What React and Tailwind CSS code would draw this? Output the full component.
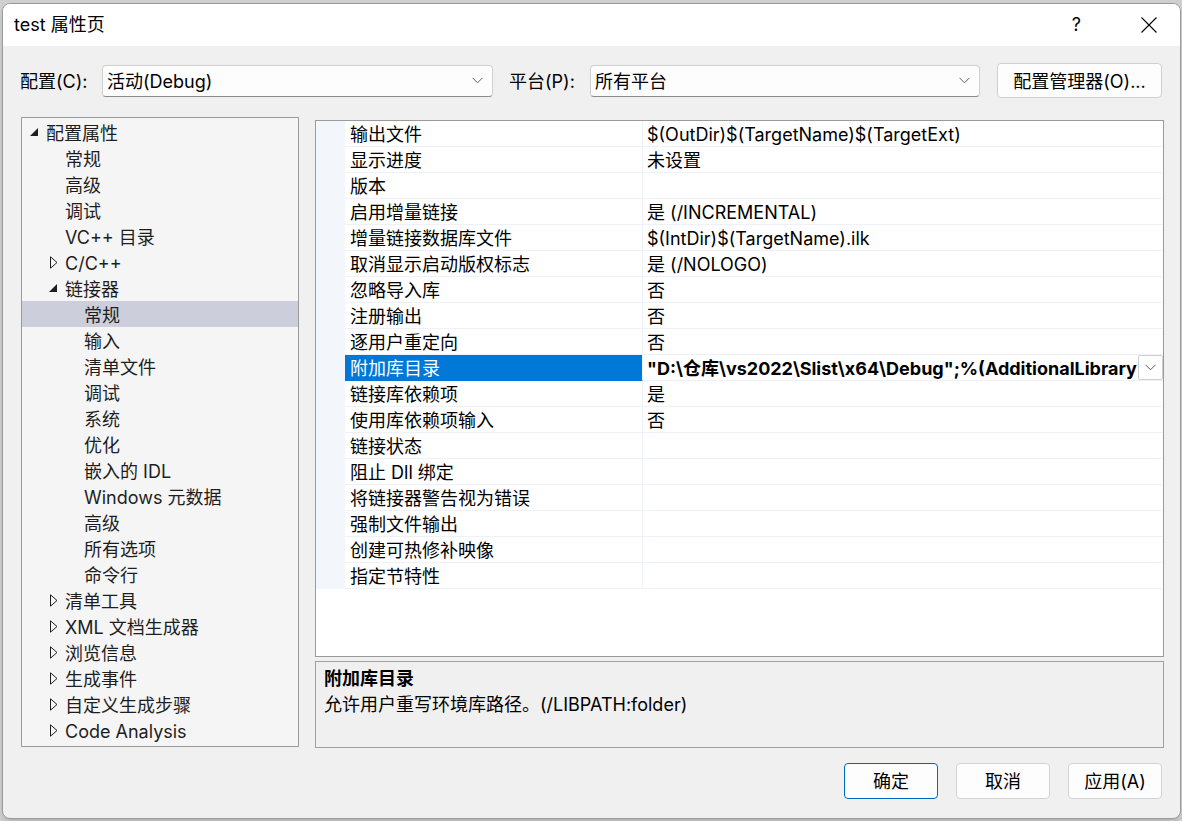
import React from 'react'

const FONT = { fontFamily: 'Inter, "Noto Sans CJK SC", sans-serif' }

const TREE = [
	{ t: '配置属性', lvl: 0, arrow: 'open' },
	{ t: '常规', lvl: 1 },
	{ t: '高级', lvl: 1 },
	{ t: '调试', lvl: 1 },
	{ t: 'VC++ 目录', lvl: 1 },
	{ t: 'C/C++', lvl: 1, arrow: 'closed' },
	{ t: '链接器', lvl: 1, arrow: 'open' },
	{ t: '常规', lvl: 2, sel: true },
	{ t: '输入', lvl: 2 },
	{ t: '清单文件', lvl: 2 },
	{ t: '调试', lvl: 2 },
	{ t: '系统', lvl: 2 },
	{ t: '优化', lvl: 2 },
	{ t: '嵌入的 IDL', lvl: 2 },
	{ t: 'Windows 元数据', lvl: 2 },
	{ t: '高级', lvl: 2 },
	{ t: '所有选项', lvl: 2 },
	{ t: '命令行', lvl: 2 },
	{ t: '清单工具', lvl: 1, arrow: 'closed' },
	{ t: 'XML 文档生成器', lvl: 1, arrow: 'closed' },
	{ t: '浏览信息', lvl: 1, arrow: 'closed' },
	{ t: '生成事件', lvl: 1, arrow: 'closed' },
	{ t: '自定义生成步骤', lvl: 1, arrow: 'closed' },
	{ t: 'Code Analysis', lvl: 1, arrow: 'closed' },
]

const LEVEL_PAD = { 0: 'pl-[5px]', 1: 'pl-[24px]', 2: 'pl-[43px]' }

const PROPS = [
	['输出文件', '$(OutDir)$(TargetName)$(TargetExt)'],
	['显示进度', '未设置'],
	['版本', ''],
	['启用增量链接', '是 (/INCREMENTAL)'],
	['增量链接数据库文件', '$(IntDir)$(TargetName).ilk'],
	['取消显示启动版权标志', '是 (/NOLOGO)'],
	['忽略导入库', '否'],
	['注册输出', '否'],
	['逐用户重定向', '否'],
	['附加库目录', '"D:\\仓库\\vs2022\\Slist\\x64\\Debug";%(AdditionalLibrary', true],
	['链接库依赖项', '是'],
	['使用库依赖项输入', '否'],
	['链接状态', ''],
	['阻止 Dll 绑定', ''],
	['将链接器警告视为错误', ''],
	['强制文件输出', ''],
	['创建可热修补映像', ''],
	['指定节特性', ''],
]

function Chevron() {
	return (
		<svg width="11" height="7" viewBox="0 0 11 7" fill="none">
			<path d="M0.5 0.8 L5.5 5.8 L10.5 0.8" stroke="#606060" strokeWidth="1" />
		</svg>
	)
}

function Arrow({ kind }) {
	if (kind === 'open') {
		return (
			<svg width="8" height="8" viewBox="0 0 8 8" className="ml-[3px]">
				<path d="M8 0 L8 8 L0 8 Z" fill="#1e1e1e" />
			</svg>
		)
	}
	if (kind === 'closed') {
		return (
			<svg width="8" height="13" viewBox="0 0 8 13" className="ml-[4px]">
				<path d="M0.5 0.8 L7 6.5 L0.5 12.2 Z" fill="none" stroke="#1e1e1e" strokeWidth="1" />
			</svg>
		)
	}
	return null
}

function Select({ value, width }) {
	return (
		<div className={`${width} h-[32px] flex items-center justify-between bg-[#fdfdfd] border border-[#d0d0d0] border-b-[#8a8a8a] rounded-[4px] pl-[4px] pr-[9px]`}>
			<span className="text-[18px] leading-[24px] pt-[3px] text-black">{value}</span>
			<Chevron />
		</div>
	)
}

function Button({ children, primary, width }) {
	return (
		<div className={`${width} h-[36px] flex items-center justify-center rounded-[4px] bg-[#fdfdfd] text-[18px] leading-[24px] pt-[2px] text-black ${primary ? 'border border-[#0067c0]' : 'border border-[#d3d3d3]'}`}>
			{children}
		</div>
	)
}

export default function App() {
	return (
		<div className="w-[1182px] h-[821px] bg-[#cfcfcf] pl-[2px] pt-[3px] overflow-hidden" style={FONT}>
			<div className="w-[1179px] h-[816px] flex flex-col bg-[#f0f0f0] border border-[#9b9b9b] rounded-[8px] overflow-hidden shadow-md">
				{/* title bar */}
				<div className="h-[42px] bg-white flex items-center pl-[11px] pr-[23px] shrink-0">
					<span className="text-[18px] leading-[24px] text-black flex-1">test 属性页</span>
					<span className="text-[18px] leading-[24px] text-black mr-[60px]">?</span>
					<svg width="16" height="16" viewBox="0 0 16 16">
						<path d="M0.5 0.5 L15.5 15.5 M15.5 0.5 L0.5 15.5" stroke="#000" strokeWidth="1.1" />
					</svg>
				</div>

				{/* config row */}
				<div className="flex items-center mt-[17px] pl-[17px] h-[35px]">
					<span className="w-[82px] text-[18px] leading-[24px] pt-[3px] text-black">配置(C):</span>
					<Select value="活动(Debug)" width="w-[391px]" />
					<span className="ml-[16px] w-[81px] text-[18px] leading-[24px] pt-[3px] text-black">平台(P):</span>
					<Select value="所有平台" width="w-[390px]" />
					<div className="ml-[17px] w-[165px] h-[35px] flex items-center justify-center bg-[#fdfdfd] border border-[#d0d0d0] rounded-[4px] text-[18px] leading-[24px] pt-[2px] text-black">
						配置管理器(O)...
					</div>
				</div>

				{/* main */}
				<div className="flex mt-[19px] pl-[18px]">
					{/* tree */}
					<div className="w-[278px] h-[630px] bg-[#f5f5f5] border border-[#9a9a9a] pt-[1px]">
						{TREE.map((n, i) => (
							<div
								key={i}
								className={`h-[26px] flex items-center ${LEVEL_PAD[n.lvl]} ${n.sel ? 'bg-[#cccedb]' : ''}`}
							>
								<div className="w-[19px] flex items-center">
									<Arrow kind={n.arrow} />
								</div>
								<span className="text-[18px] leading-[24px] pt-[3px] text-[#1e1e1e] whitespace-nowrap">{n.t}</span>
							</div>
						))}
					</div>

					{/* right column */}
					<div className="ml-[16px] w-[849px] flex flex-col pt-[3px]">
						<div className="h-[537px] bg-white border border-[#9a9a9a] flex flex-col">
							{PROPS.map(([name, value, sel], i) => (
								<div key={i} className="h-[26px] flex">
									<div className="w-[29px] bg-[#f3f6fb] shrink-0" />
									<div
										className={`w-[298px] shrink-0 flex items-center pl-[5px] border-b border-r text-[18px] leading-[24px] ${sel ? 'bg-[#0078d7] text-white border-b-[#0078d7] border-r-[#f0f3f8]' : 'border-[#eef2f8] text-black'}`}
									>
										<span className="whitespace-nowrap pt-[3px]">{name}</span>
									</div>
									<div className="flex-1 min-w-0 flex items-center border-b border-[#eef2f8] pl-[4px]">
										<span className={`flex-1 min-w-0 overflow-hidden whitespace-nowrap text-[18px] leading-[24px] pt-[3px] text-black ${sel ? 'font-bold' : ''}`}>
											{value}
										</span>
										{sel && (
											<div className="w-[25px] h-[25px] shrink-0 flex items-center justify-center bg-white border border-[#cfcfcf] rounded-[2px]">
												<Chevron />
											</div>
										)}
									</div>
								</div>
							))}
							<div className="flex-1 flex">
								<div className="w-[29px] bg-white" />
							</div>
						</div>

						<div className="mt-[4px] h-[87px] bg-[#f0f0f0] border border-[#a0a0a0] pl-[8px] pt-[4px]">
							<div className="text-[18px] leading-[26px] font-bold text-black">附加库目录</div>
							<div className="text-[18px] leading-[25px] text-black">允许用户重写环境库路径。(/LIBPATH:folder)</div>
						</div>
					</div>
				</div>

				{/* buttons */}
				<div className="flex justify-end gap-[18px] mt-[15px] pr-[18px]">
					<Button primary width="w-[94px]">确定</Button>
					<Button width="w-[94px]">取消</Button>
					<Button width="w-[94px]">应用(A)</Button>
				</div>
			</div>
		</div>
	)
}
